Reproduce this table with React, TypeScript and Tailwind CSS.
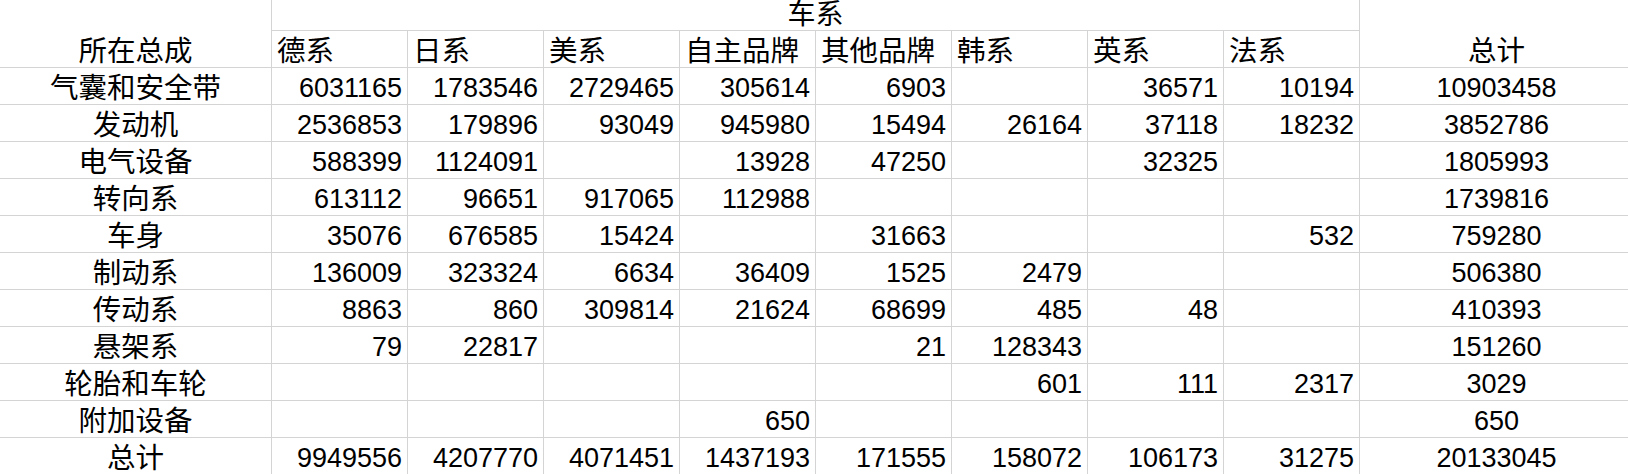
const brands = ["德系", "日系", "美系", "自主品牌", "其他品牌", "韩系", "英系", "法系"];

type Row = { name: string; values: (number | null)[]; total: number };

const rows: Row[] = [
  { name: "气囊和安全带", values: [6031165, 1783546, 2729465, 305614, 6903, null, 36571, 10194], total: 10903458 },
  { name: "发动机", values: [2536853, 179896, 93049, 945980, 15494, 26164, 37118, 18232], total: 3852786 },
  { name: "电气设备", values: [588399, 1124091, null, 13928, 47250, null, 32325, null], total: 1805993 },
  { name: "转向系", values: [613112, 96651, 917065, 112988, null, null, null, null], total: 1739816 },
  { name: "车身", values: [35076, 676585, 15424, null, 31663, null, null, 532], total: 759280 },
  { name: "制动系", values: [136009, 323324, 6634, 36409, 1525, 2479, null, null], total: 506380 },
  { name: "传动系", values: [8863, 860, 309814, 21624, 68699, 485, 48, null], total: 410393 },
  { name: "悬架系", values: [79, 22817, null, null, 21, 128343, null, null], total: 151260 },
  { name: "轮胎和车轮", values: [null, null, null, null, null, 601, 111, 2317], total: 3029 },
  { name: "附加设备", values: [null, null, null, 650, null, null, null, null], total: 650 },
  { name: "总计", values: [9949556, 4207770, 4071451, 1437193, 171555, 158072, 106173, 31275], total: 20133045 },
];

const line = "border-[#d4d4d4]";

export default function App() {
  return (
    <div className="h-[474px] w-[1628px] overflow-hidden bg-white font-[family-name:'Liberation_Sans','Noto_Sans_CJK_SC',sans-serif] text-black">
      <div className="grid grid-cols-[272px_repeat(8,136px)_268px] grid-rows-[31px_37px_repeat(11,37px)]">
        <div className={`row-span-2 flex items-end justify-center border-r border-b ${line} pb-[2px] text-[28.5px] leading-none`}>
          所在总成
        </div>
        <div className={`col-span-8 flex items-end justify-center border-r border-b ${line} pb-px text-[28px] leading-none`}>
          车系
        </div>
        <div className={`row-span-2 flex items-end justify-center border-b ${line} pb-[2px] pl-[5px] text-[28.5px] leading-none`}>
          总计
        </div>
        {brands.map((brand) => (
          <div
            key={brand}
            className={`flex items-end border-r border-b ${line} pb-[2px] pl-[5px] text-[28.5px] leading-none`}
          >
            {brand}
          </div>
        ))}

        {rows.map((row) => (
          <RowCells key={row.name} row={row} />
        ))}
      </div>
    </div>
  );
}

function RowCells({ row }: { row: Row }) {
  return (
    <>
      <div className={`flex items-end justify-center border-r border-b ${line} pb-[2px] text-[28.5px] leading-none`}>
        {row.name}
      </div>
      {row.values.map((value, i) => (
        <div
          key={i}
          className={`flex items-end justify-end border-r border-b ${line} pr-[5px] pb-[2px] text-[27px] leading-none`}
        >
          {value ?? ""}
        </div>
      ))}
      <div className={`flex items-end justify-center border-b ${line} pb-[2px] pl-[5px] text-[27px] leading-none`}>
        {row.total}
      </div>
    </>
  );
}
